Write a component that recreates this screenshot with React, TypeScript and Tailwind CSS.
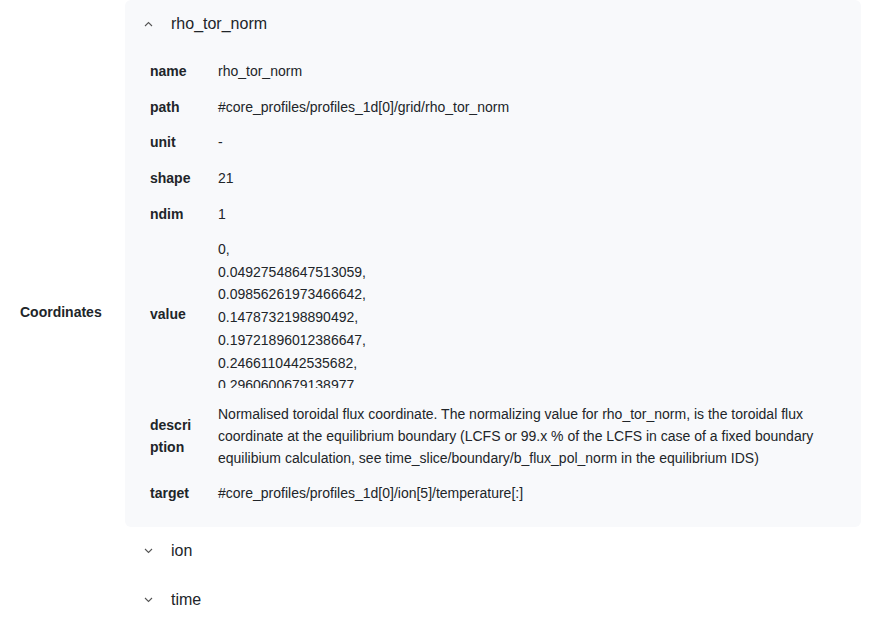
const rows: { label: string; value: string }[] = [
  { label: "name", value: "rho_tor_norm" },
  { label: "path", value: "#core_profiles/profiles_1d[0]/grid/rho_tor_norm" },
  { label: "unit", value: "-" },
  { label: "shape", value: "21" },
  { label: "ndim", value: "1" },
];

const values = [
  "0,",
  "0.04927548647513059,",
  "0.09856261973466642,",
  "0.1478732198890492,",
  "0.19721896012386647,",
  "0.2466110442535682,",
  "0.2960600679138977,",
];

const Chevron = ({ up }: { up?: boolean }) => (
  <svg width="9" height="6" viewBox="0 0 9 6" className="shrink-0">
    <polyline
      points={up ? "1,5 4.5,1.5 8,5" : "1,1 4.5,4.5 8,1"}
      fill="none"
      stroke="#555"
      strokeWidth="1.1"
    />
  </svg>
);

const Row = ({ label, children }: { label: string; children: React.ReactNode }) => (
  <div className="flex items-center h-[35.75px]">
    <div className="w-[68px] shrink-0 font-bold">{label}</div>
    <div>{children}</div>
  </div>
);

const Collapsed = ({ title }: { title: string }) => (
  <div className="flex items-center h-[49px] pl-[19px] gap-[18px] text-base">
    <Chevron />
    <span>{title}</span>
  </div>
);

export default function App() {
  return (
    <div
      className="flex w-[877px] bg-white text-[#212529]"
      style={{ fontFamily: '"Liberation Sans", Arial, sans-serif' }}
    >
      <div className="w-[125px] shrink-0 flex items-center pl-5 text-sm font-bold">Coordinates</div>
      <div className="flex-1 pr-4">
        <div className="bg-[#f8f9fb] rounded-md pb-[16px]">
          <div className="flex items-center h-[47px] pl-[19px] gap-[18px] text-base">
            <Chevron up />
            <span>rho_tor_norm</span>
          </div>
          <div className="pl-[25px] pr-6 pt-[6px] text-sm">
            {rows.map((r) => (
              <Row key={r.label} label={r.label}>
                {r.value}
              </Row>
            ))}
            <div className="flex items-center pt-[6px] pb-[7px]">
              <div className="w-[68px] shrink-0 font-bold">value</div>
              <div className="h-[152px] overflow-hidden">
                <div className="h-[150px] overflow-hidden leading-[22.75px]">
                  {values.map((v) => (
                    <div key={v}>{v}</div>
                  ))}
                </div>
              </div>
            </div>
            <div className="flex items-center py-[6px] leading-[22px]">
              <div className="w-[68px] shrink-0 pr-6 font-bold break-all">description</div>
              <div>
                Normalised toroidal flux coordinate. The normalizing value for rho_tor_norm, is the toroidal
                flux coordinate at the equilibrium boundary (LCFS or 99.x % of the LCFS in case of a fixed
                boundary equilibium calculation, see time_slice/boundary/b_flux_pol_norm in the equilibrium
                IDS)
              </div>
            </div>
            <Row label="target">#core_profiles/profiles_1d[0]/ion[5]/temperature[:]</Row>
          </div>
        </div>
        <Collapsed title="ion" />
        <Collapsed title="time" />
      </div>
    </div>
  );
}
